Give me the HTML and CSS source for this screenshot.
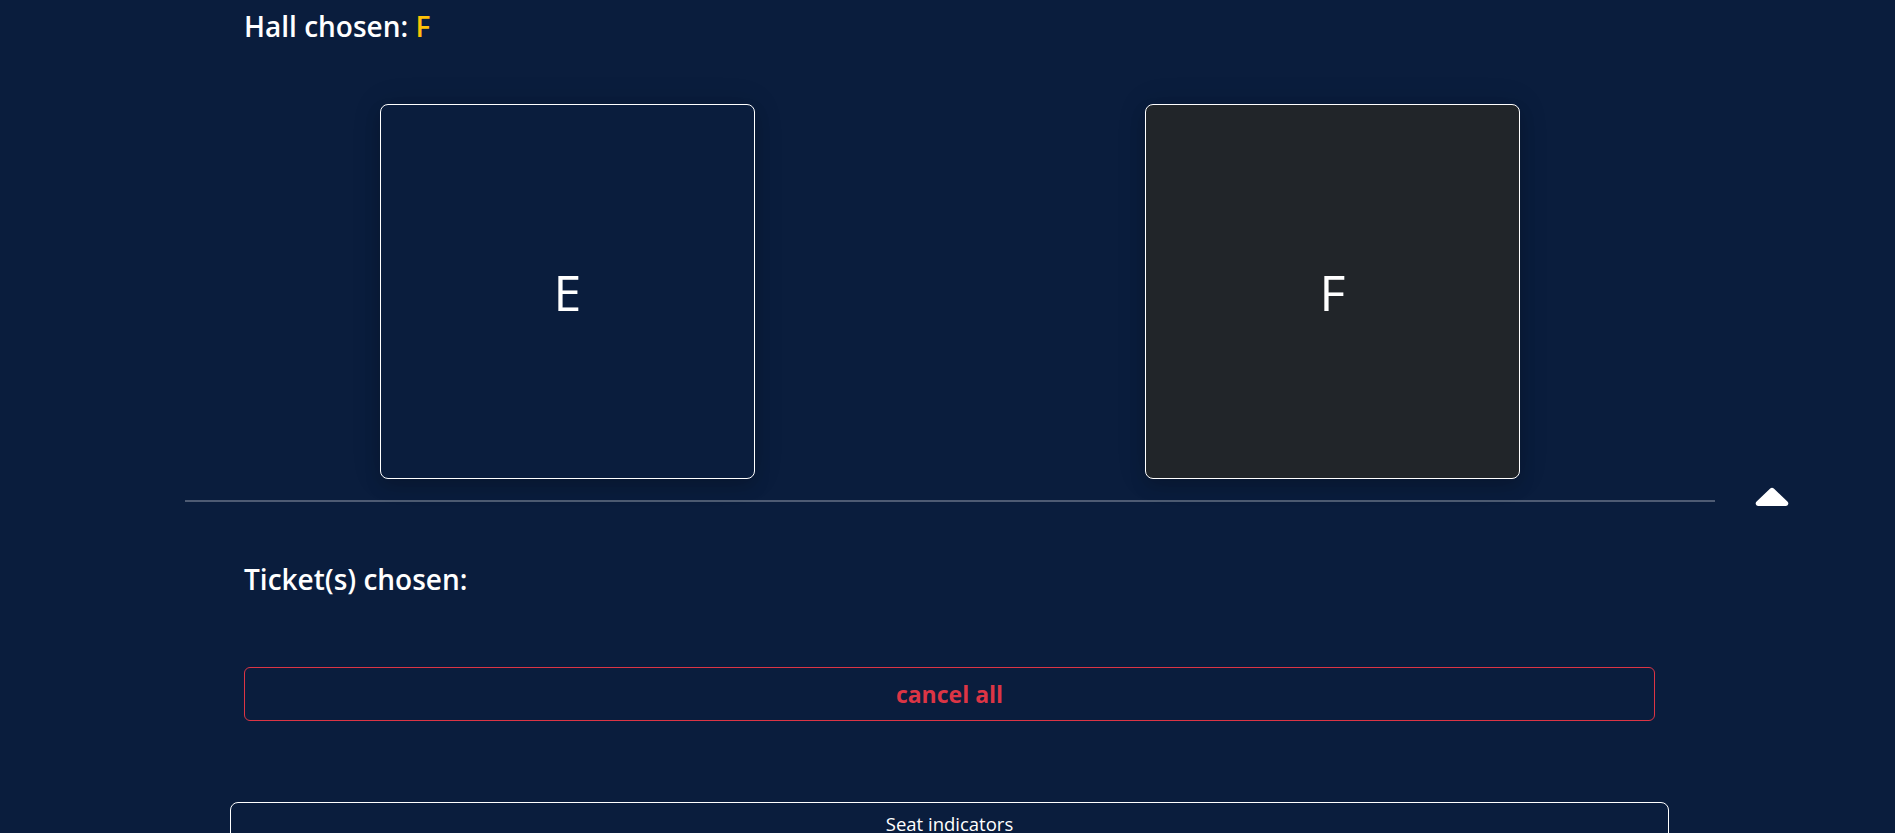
FILE: index.html
```html
<!DOCTYPE html>
<html lang="en">
<head>
<meta charset="utf-8">
<title>Hall selection</title>
<link rel="stylesheet" href="styles.css">
</head>
<body>
<main class="page">
  <section class="hall-section">
    <h3 class="heading">Hall chosen: <span class="accent">F</span></h3>
    <div class="halls">
      <div class="hall-col"><div class="hall-card">E</div></div>
      <div class="hall-col"><div class="hall-card active">F</div></div>
    </div>
    <div class="divider-row">
      <hr class="divider">
      <button class="collapse-btn" type="button" aria-label="collapse">
        <svg width="34" height="19" viewBox="0 0 34 19" aria-hidden="true"><path d="M15.2 1.6 Q17 -0.2 18.8 1.6 L32.4 14.6 Q34.2 16.6 32.6 18.2 Q31.9 18.9 30.6 18.9 H3.4 Q2.1 18.9 1.4 18.2 Q-0.2 16.6 1.6 14.6 Z" fill="#ffffff"/></svg>
      </button>
    </div>
  </section>
  <section class="tickets">
    <h3 class="heading">Ticket(s) chosen:</h3>
    <button class="cancel-btn" type="button">cancel all</button>
  </section>
  <div class="seat-indicators">Seat indicators</div>
</main>
</body>
</html>
```
FILE: styles.css
```css
html, body {
  height: 100%;
  overflow: hidden;
}
body {
  margin: 0;
  background: #0a1d3d;
  color: #ffffff;
  font-family: "Open Sans", "Noto Sans", sans-serif;
}
.page {
  display: flex;
  flex-direction: column;
}
.heading {
  margin: 9px 0 0 244px;
  font-size: 28px;
  line-height: 34px;
  font-weight: 600;
  color: #ffffff;
}
.accent {
  color: #ffc107;
}
.halls {
  margin: 61px 0 0 185px;
  width: 1530px;
  display: grid;
  grid-template-columns: 1fr 1fr;
}
.hall-col {
  display: flex;
  justify-content: center;
}
.hall-card {
  box-sizing: border-box;
  width: 375px;
  height: 375px;
  border: 1px solid #ffffff;
  border-radius: 8px;
  display: flex;
  align-items: center;
  justify-content: center;
  font-size: 50px;
  font-weight: 400;
  color: #ffffff;
  box-shadow: 0 8px 16px rgba(0, 0, 0, 0.15), 0 0 30px rgba(0, 0, 0, 0.12);
}
.hall-card.active {
  background: #212529;
}
.divider-row {
  margin: 8px 0 0 185px;
  display: flex;
  align-items: flex-start;
}
.divider {
  width: 1530px;
  margin: 13px 0 0 0;
  border: 0;
  height: 2px;
  background: rgba(255, 255, 255, 0.28);
}
.collapse-btn {
  margin-left: 40px;
  padding: 0;
  border: 0;
  background: none;
  height: 19px;
  display: flex;
  cursor: pointer;
}
.tickets {
  display: flex;
  flex-direction: column;
}
.tickets .heading {
  margin-top: 56px;
}
.cancel-btn {
  margin: 71px 0 0 244px;
  width: 1411px;
  height: 54px;
  box-sizing: border-box;
  border: 1px solid #dc3545;
  border-radius: 6px;
  background: transparent;
  color: #dc3545;
  font-family: "Open Sans", "Noto Sans", sans-serif;
  font-size: 23px;
  font-weight: 700;
  line-height: 36px;
  padding: 8px 16px;
}
.seat-indicators {
  margin: 81px 0 0 230px;
  width: 1439px;
  box-sizing: border-box;
  height: 300px;
  border: 1px solid #ffffff;
  border-radius: 8px;
  padding-top: 9px;
  text-align: center;
  font-size: 18.5px;
  line-height: 24px;
  color: #ffffff;
}
```
